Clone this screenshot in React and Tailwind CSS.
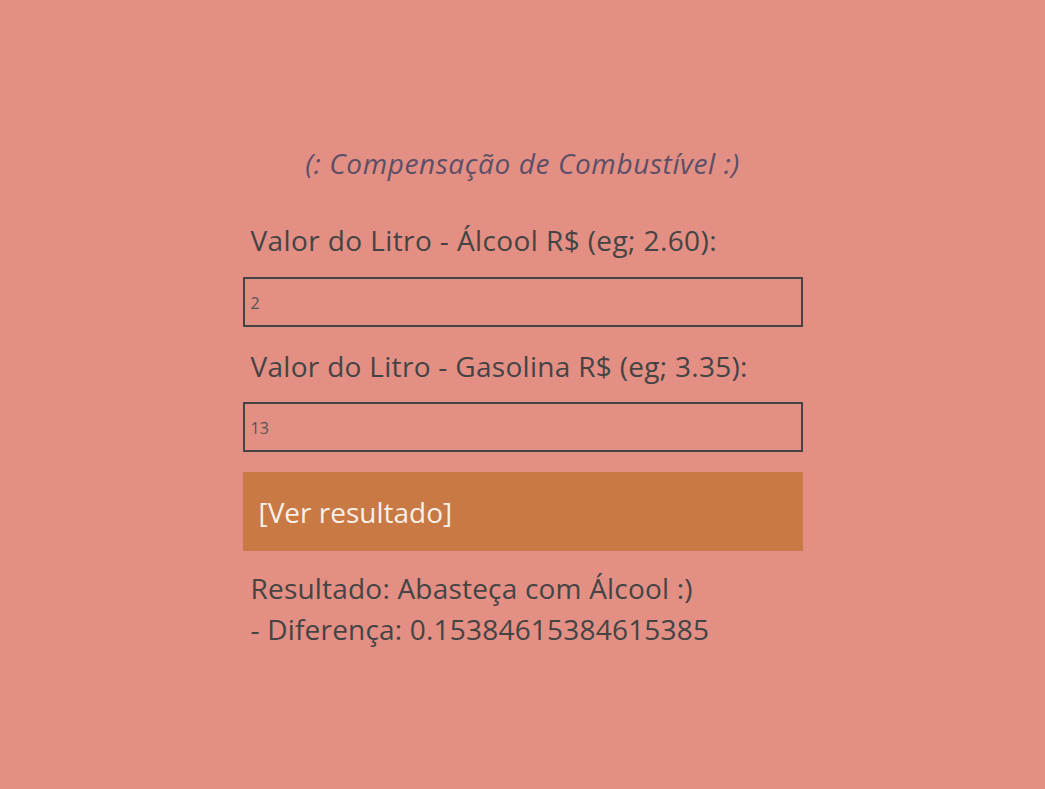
export default function App() {
  return (
    <div className="min-h-[789px] w-full bg-[#e38f84] flex justify-center" style={{ fontFamily: '"Open Sans", sans-serif' }}>
      <div className="w-[560px] pt-[145px] flex flex-col">
        <h1 className="text-center italic text-[28px] leading-[36px] tracking-[0.6px] text-[#5b5068]">(: Compensação de Combustível :)</h1>
        <label className="mt-[42px] px-2 text-[28px] leading-[34px] tracking-[0.4px] text-[#444444]">Valor do Litro - Álcool R$ (eg; 2.60):</label>
        <input readOnly value="2" className="mt-[20px] h-[50px] border-2 border-[#444444] bg-transparent px-[6px] pt-[2px] text-[16px] text-[#555555] outline-none" />
        <label className="mt-[22px] px-2 text-[28px] leading-[34px] tracking-[0.3px] text-[#444444]">Valor do Litro - Gasolina R$ (eg; 3.35):</label>
        <input readOnly value="13" className="mt-[19px] h-[50px] border-2 border-[#444444] bg-transparent px-[6px] pt-[2px] text-[16px] text-[#555555] outline-none" />
        <button className="mt-[20px] h-[79px] bg-[#c97944] text-left px-4 text-[28px] text-[#f7f0ea]">[Ver resultado]</button>
        <div className="mt-[17px] px-2 text-[28px] leading-[41px] tracking-[0.2px] text-[#444444]">
          <div>Resultado: Abasteça com Álcool :)</div>
          <div>- Diferença: 0.15384615384615385</div>
        </div>
      </div>
    </div>
  );
}
